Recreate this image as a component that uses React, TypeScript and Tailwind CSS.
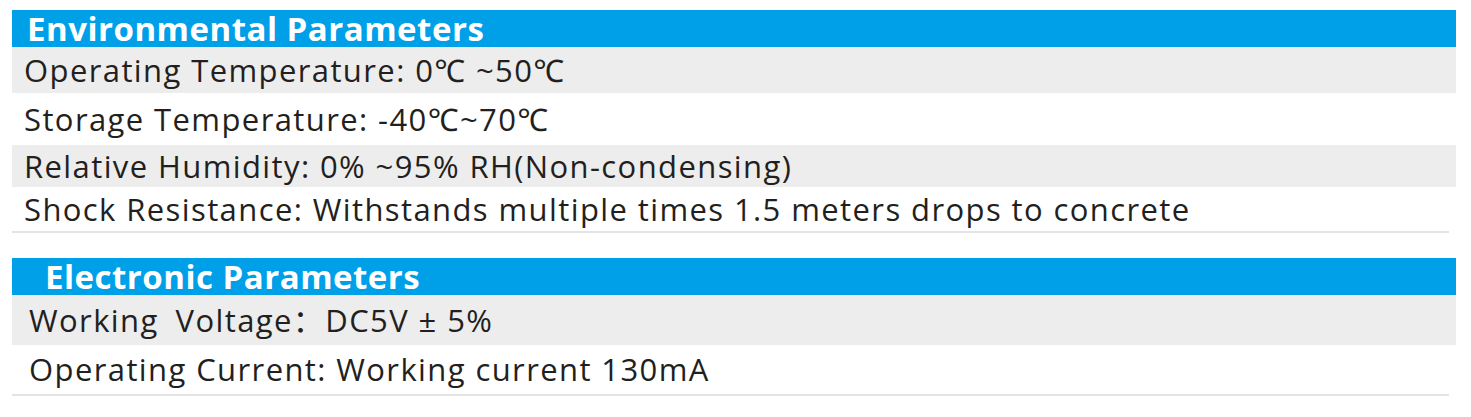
const font = { fontFamily: '"Open Sans", "Noto Sans", "Noto Sans CJK SC", sans-serif' };

type Row = { text: string; h: string; shade: boolean };

const envRows: Row[] = [
  { text: 'Operating Temperature: 0℃ ~50℃', h: 'h-[46px]', shade: true },
  { text: 'Storage Temperature: -40℃~70℃', h: 'h-[52px]', shade: false },
  { text: 'Relative Humidity: 0% ~95% RH(Non-condensing)', h: 'h-[42px]', shade: true },
  { text: 'Shock Resistance: Withstands multiple times 1.5 meters drops to concrete', h: 'h-[44px]', shade: false },
];

const elecRows: Row[] = [
  { text: 'Working\u2002Voltage：DC5V ± 5%', h: 'h-[50px]', shade: true },
  { text: 'Operating Current: Working current 130mA', h: 'h-[49px]', shade: false },
];

function Section({ title, rows, titlePad, rowPad }: { title: string; rows: Row[]; titlePad: string; rowPad: string }) {
  return (
    <div className="w-[1444px]">
      <div className={`h-[37px] bg-[#00a0e9] flex items-center ${titlePad}`}>
        <span className="text-[33px] font-bold text-white leading-none tracking-[0.5px] whitespace-nowrap">{title}</span>
      </div>
      {rows.map((r, i) => (
        <div
          key={i}
          className={`${r.h} flex items-center ${rowPad} ${r.shade ? 'bg-[#ededed]' : 'bg-white'}`}
        >
          <span className="text-[31px] leading-none tracking-[1.4px] text-[#231f20] whitespace-nowrap">{r.text}</span>
        </div>
      ))}
      <div className="h-[2px] w-[1437px] bg-[#e4e4e4]" />
    </div>
  );
}

export default function App() {
  return (
    <div className="w-[1471px] h-[417px] bg-white pt-[10px] pl-[12px]" style={font}>
      <Section title="Environmental Parameters" rows={envRows} titlePad="pl-[15px]" rowPad="pl-[12px]" />
      <div className="h-[25px]" />
      <Section title="Electronic Parameters" rows={elecRows} titlePad="pl-[33px]" rowPad="pl-[17px]" />
    </div>
  );
}
